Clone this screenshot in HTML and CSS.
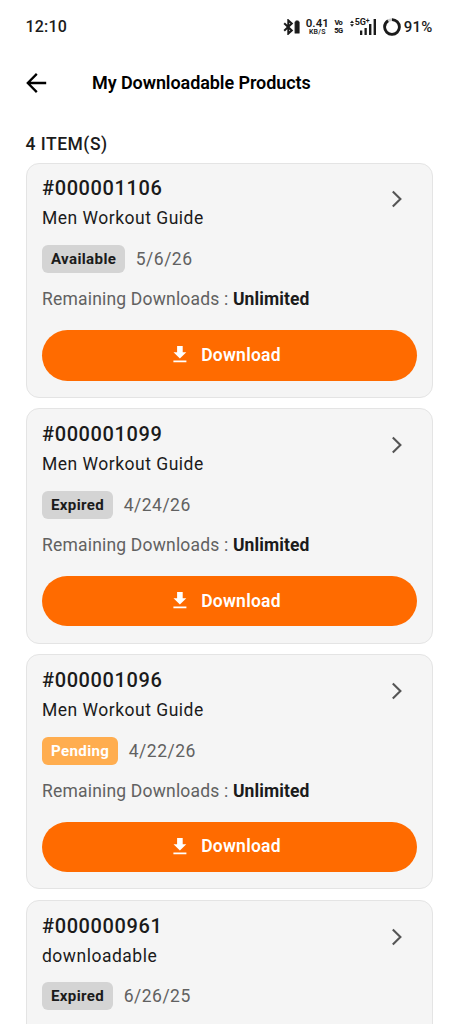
FILE: index.html
```html
<!DOCTYPE html>
<html lang="en">
<head>
<meta charset="utf-8">
<meta name="viewport" content="width=device-width, initial-scale=1">
<title>My Downloadable Products</title>
<link rel="stylesheet" href="styles.css">
</head>
<body>
<svg width="0" height="0" class="defs" aria-hidden="true">
  <symbol id="chevron" viewBox="0 0 12 18"><path d="M1.8 1.6 9.4 9 1.8 16.4" fill="none" stroke="currentColor" stroke-width="2.1"/></symbol>
  <symbol id="download" viewBox="0 0 14 17"><path d="M4.1 0h5.6v6.2h3.6L6.9 12.4.5 6.2h3.6zM.4 14.4h13v1.9H.4z" fill="currentColor"/></symbol>
</svg>
<div class="screen">
  <div class="status">
    <span class="clock">12:10</span>
    <div class="indicators">
      <svg class="bluetooth" viewBox="0 0 18 16"><path d="M1.2 4.2 8.8 11.4 5.3 14.6V1.4L8.8 4.6 1.2 11.8" fill="none" stroke="currentColor" stroke-width="2"/><path d="M12.2 3h.9V2h2v1h.9v11h-3.8z" fill="currentColor" stroke="currentColor" stroke-width="1.2" stroke-linejoin="round"/></svg>
      <div class="stack speed"><b>0.41</b><small>KB/S</small></div>
      <div class="stack volte"><b>Vo</b><b>5G</b></div>
      <div class="signal">
        <svg class="bars" viewBox="0 0 27 18"><path d="M0 4.9 2 2.4l2 2.5zM0 6.3h4L2 8.8zM10 12.5h2.3V17H10zm4.5-2.6h2.3V17h-2.3zM19 6h2.4v11H19zm4.6-5H26v16h-2.4z" fill="currentColor"/></svg>
        <b class="network">5G<sup>+</sup></b>
      </div>
      <svg class="ring" viewBox="0 0 18 18"><circle cx="9" cy="9" r="7.4" fill="none" stroke="#c9c9c9" stroke-width="2.6"/><circle cx="9" cy="9" r="7.4" fill="none" stroke="currentColor" stroke-width="2.8" pathLength="100" stroke-dasharray="91 9" transform="rotate(-90 9 9)"/></svg>
      <span class="percent">91%</span>
    </div>
  </div>
  <header class="appbar">
    <svg class="back" viewBox="0 0 22 22"><path d="M20.2 11H2M10.8 1.9 1.8 11l9 9.1" fill="none" stroke="currentColor" stroke-width="2.3"/></svg>
    <h1>My Downloadable Products</h1>
  </header>
  <main>
    <p class="count">4 ITEM(S)</p>
    <div class="list">
      <article class="card">
        <div class="head"><div><h2>#000001106</h2><p class="name">Men Workout Guide</p></div><svg class="chevron"><use href="#chevron"/></svg></div>
        <div class="meta"><span class="badge">Available</span><span class="date">5/6/26</span></div>
        <p class="remaining">Remaining Downloads : <b>Unlimited</b></p>
        <button class="download"><svg><use href="#download"/></svg><span>Download</span></button>
      </article>
      <article class="card">
        <div class="head"><div><h2>#000001099</h2><p class="name">Men Workout Guide</p></div><svg class="chevron"><use href="#chevron"/></svg></div>
        <div class="meta"><span class="badge">Expired</span><span class="date">4/24/26</span></div>
        <p class="remaining">Remaining Downloads : <b>Unlimited</b></p>
        <button class="download"><svg><use href="#download"/></svg><span>Download</span></button>
      </article>
      <article class="card">
        <div class="head"><div><h2>#000001096</h2><p class="name">Men Workout Guide</p></div><svg class="chevron"><use href="#chevron"/></svg></div>
        <div class="meta"><span class="badge pending">Pending</span><span class="date">4/22/26</span></div>
        <p class="remaining">Remaining Downloads : <b>Unlimited</b></p>
        <button class="download"><svg><use href="#download"/></svg><span>Download</span></button>
      </article>
      <article class="card last">
        <div class="head"><div><h2>#000000961</h2><p class="name">downloadable</p></div><svg class="chevron"><use href="#chevron"/></svg></div>
        <div class="meta"><span class="badge">Expired</span><span class="date">6/26/25</span></div>
      </article>
    </div>
  </main>
</div>
</body>
</html>
```
FILE: styles.css
```css
* { box-sizing: border-box; margin: 0; padding: 0; }
body { background: #fff; color: #1b1b1b; font-family: Roboto, "Noto Sans", sans-serif; overflow: hidden; }
.defs { display: block; }
.screen { height: 1024px; overflow: hidden; padding: 0 26px 0 25.5px; }
svg { flex: none; }

.status { display: flex; justify-content: space-between; align-items: center; height: 53px; }
.clock { font-size: 16px; font-weight: 500; letter-spacing: .2px; }
.indicators { display: flex; align-items: center; }
.bluetooth { width: 18px; height: 16px; }
.stack { display: flex; flex-direction: column; align-items: center; }
.speed { width: 23px; margin-left: 5px; }
.speed b { font-size: 11.5px; line-height: 11px; font-weight: 600; }
.speed small { font-size: 7px; line-height: 7px; font-weight: 600; letter-spacing: .2px; }
.volte { width: 9px; margin-left: 5px; }
.volte b { font-size: 7.5px; line-height: 8px; letter-spacing: -.6px; font-weight: 800; }
.signal { display: grid; width: 27px; height: 18px; margin-left: 7px; }
.bars, .network { grid-area: 1 / 1; }
.bars { width: 27px; height: 18px; }
.network { font-size: 9px; line-height: 9px; padding-left: 5px; font-weight: 700; letter-spacing: -.2px; }
.network sup { font-size: 7px; line-height: 0; vertical-align: 2px; }
.ring { width: 18px; height: 18px; margin-left: 6px; }
.percent { font-size: 15px; font-weight: 500; letter-spacing: .2px; margin: 0 .5px 0 3px; }

.appbar { display: flex; align-items: center; height: 60px; color: #000; }
.back { width: 22px; height: 22px; }
.appbar h1 { font-size: 18px; line-height: 24px; font-weight: 600; letter-spacing: -.08px; margin-left: 44.5px; }

.count { font-size: 17.5px; line-height: 24px; font-weight: 500; letter-spacing: .5px; padding-top: 18.5px; }
.list { display: grid; gap: 10.5px; padding-top: 7px; }
.card { height: 235.3px; border: 1px solid #e4e4e4; border-radius: 13px; background: #f5f5f5; padding: 11.8px 15.5px 0; }
.head { display: flex; justify-content: space-between; }
.card h2 { font-size: 20px; line-height: 27px; font-weight: 500; letter-spacing: .6px; }
.name { font-size: 17.5px; line-height: 24px; padding-top: 4.2px; letter-spacing: .5px; }
.chevron { width: 12px; height: 18px; margin: 14.9px 13.5px 0 0; color: #555; }
.meta { display: flex; align-items: center; padding-top: 14.6px; }
.badge { height: 28px; line-height: 28.2px; padding: 0 9px; border-radius: 6px; background: #d4d4d4; font-size: 15.1px; font-weight: 700; letter-spacing: .35px; }
.badge.pending { background: #ffad4f; color: #fff; }
.date { margin-left: 10.5px; font-size: 17.5px; line-height: 28px; letter-spacing: .5px; color: #616161; }
.remaining { padding-top: 14px; font-size: 17.5px; line-height: 24px; letter-spacing: .19px; color: #616161; }
.remaining b { color: #1b1b1b; font-weight: 700; letter-spacing: .1px; }
.download { display: flex; align-items: center; justify-content: center; width: 100%; height: 50.7px; margin-top: 18.9px; padding: 0 5px 1px 0; border: 0; border-radius: 26px; background: #ff6b00; color: #fff; font: 600 17.5px/24px Roboto, sans-serif; letter-spacing: .25px; }
.download svg { width: 14px; height: 17px; margin-right: 14.5px; }
```
